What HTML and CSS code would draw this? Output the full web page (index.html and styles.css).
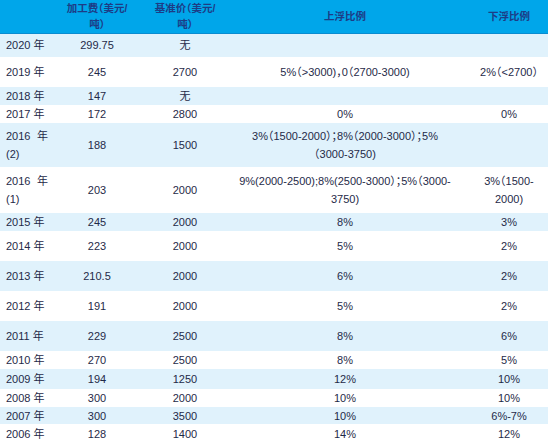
FILE: index.html
```html
<!DOCTYPE html>
<html lang="zh-CN">
<head>
<meta charset="utf-8">
<title>加工费与基准价</title>
<link rel="stylesheet" href="styles.css">
</head>
<body>
<table class="tbl">
  <colgroup>
    <col class="c1"><col class="c2"><col class="c3"><col class="c4"><col class="c5">
  </colgroup>
  <thead>
    <tr class="head">
      <th></th>
      <th>加工费（美元/吨）</th>
      <th>基准价（美元/吨）</th>
      <th>上浮比例</th>
      <th>下浮比例</th>
    </tr>
  </thead>
  <tbody>
    <tr class="alt h24"><td class="yr">2020 年</td><td>299.75</td><td>无</td><td></td><td></td></tr>
    <tr class="h30"><td class="yr">2019 年</td><td>245</td><td>2700</td><td>5%（&gt;3000)，0（2700-3000)</td><td>2%（&lt;2700）</td></tr>
    <tr class="alt h18"><td class="yr">2018 年</td><td>147</td><td>无</td><td></td><td></td></tr>
    <tr class="h18"><td class="yr">2017 年</td><td>172</td><td>2800</td><td>0%</td><td>0%</td></tr>
    <tr class="alt h44 two"><td class="yr">2016 年(2)</td><td>188</td><td>1500</td><td>3%（1500-2000）；8%（2000-3000）；5%<br>（3000-3750)</td><td></td></tr>
    <tr class="h46 two"><td class="yr">2016 年(1)</td><td>203</td><td>2000</td><td>9%(2000-2500);8%(2500-3000）；5%（3000-<br>3750)</td><td>3%（1500-<br>2000)</td></tr>
    <tr class="alt h18"><td class="yr">2015 年</td><td>245</td><td>2000</td><td>8%</td><td>3%</td></tr>
    <tr class="h30"><td class="yr">2014 年</td><td>223</td><td>2000</td><td>5%</td><td>2%</td></tr>
    <tr class="alt h30"><td class="yr">2013 年</td><td>210.5</td><td>2000</td><td>6%</td><td>2%</td></tr>
    <tr class="h30"><td class="yr">2012 年</td><td>191</td><td>2000</td><td>5%</td><td>2%</td></tr>
    <tr class="alt h30"><td class="yr">2011 年</td><td>229</td><td>2500</td><td>8%</td><td>6%</td></tr>
    <tr class="h18"><td class="yr">2010 年</td><td>270</td><td>2500</td><td>8%</td><td>5%</td></tr>
    <tr class="alt h20"><td class="yr">2009 年</td><td>194</td><td>1250</td><td>12%</td><td>10%</td></tr>
    <tr class="h18"><td class="yr">2008 年</td><td>300</td><td>2000</td><td>10%</td><td>10%</td></tr>
    <tr class="alt h17"><td class="yr">2007 年</td><td>300</td><td>3500</td><td>10%</td><td>6%-7%</td></tr>
    <tr class="h19"><td class="yr">2006 年</td><td>128</td><td>1400</td><td>14%</td><td>12%</td></tr>
  </tbody>
</table>
</body>
</html>
```
FILE: styles.css
```css
html, body {
  margin: 0;
  padding: 0;
  background: #ffffff;
}

body {
  font-family: "Liberation Sans", "Noto Sans CJK SC", sans-serif;
  font-size: 11px;
  color: #1f2a48;
  font-feature-settings: "halt" 1;
}

.tbl {
  width: 548px;
  border-collapse: collapse;
  border-spacing: 0;
  table-layout: fixed;
}

.c1 { width: 54px; }
.c2 { width: 86px; }
.c3 { width: 90px; }
.c4 { width: 240px; }
.c5 { width: 78px; }

.tbl th,
.tbl td {
  padding: 0 6px;
  text-align: center;
  vertical-align: middle;
  line-height: 14px;
  font-weight: normal;
  white-space: normal;
}

.head {
  height: 33px;
  background: #00a6ea;
  border-bottom: 1px solid #0a8cd0;
}

.head th {
  font-size: 10.5px;
  font-weight: bold;
  color: #1d3c86;
  line-height: 16px;
  padding: 0 8px;
}

.tbl th:nth-child(4),
.tbl td:nth-child(4) {
  padding: 0 10px 0 0;
}

.tbl th:nth-child(5),
.tbl td:nth-child(5) {
  padding: 0 2px;
}

.tbl td.yr {
  text-align: justify;
  padding: 0 6px;
}

.alt { background: #e0f2fc; }

.two td { line-height: 18px; }

.h17 { height: 17px; }
.h18 { height: 18px; }
.h19 { height: 19px; }
.h20 { height: 20px; }
.h24 { height: 24px; }
.h30 { height: 30px; }
.h44 { height: 44px; }
.h46 { height: 46px; }
```
